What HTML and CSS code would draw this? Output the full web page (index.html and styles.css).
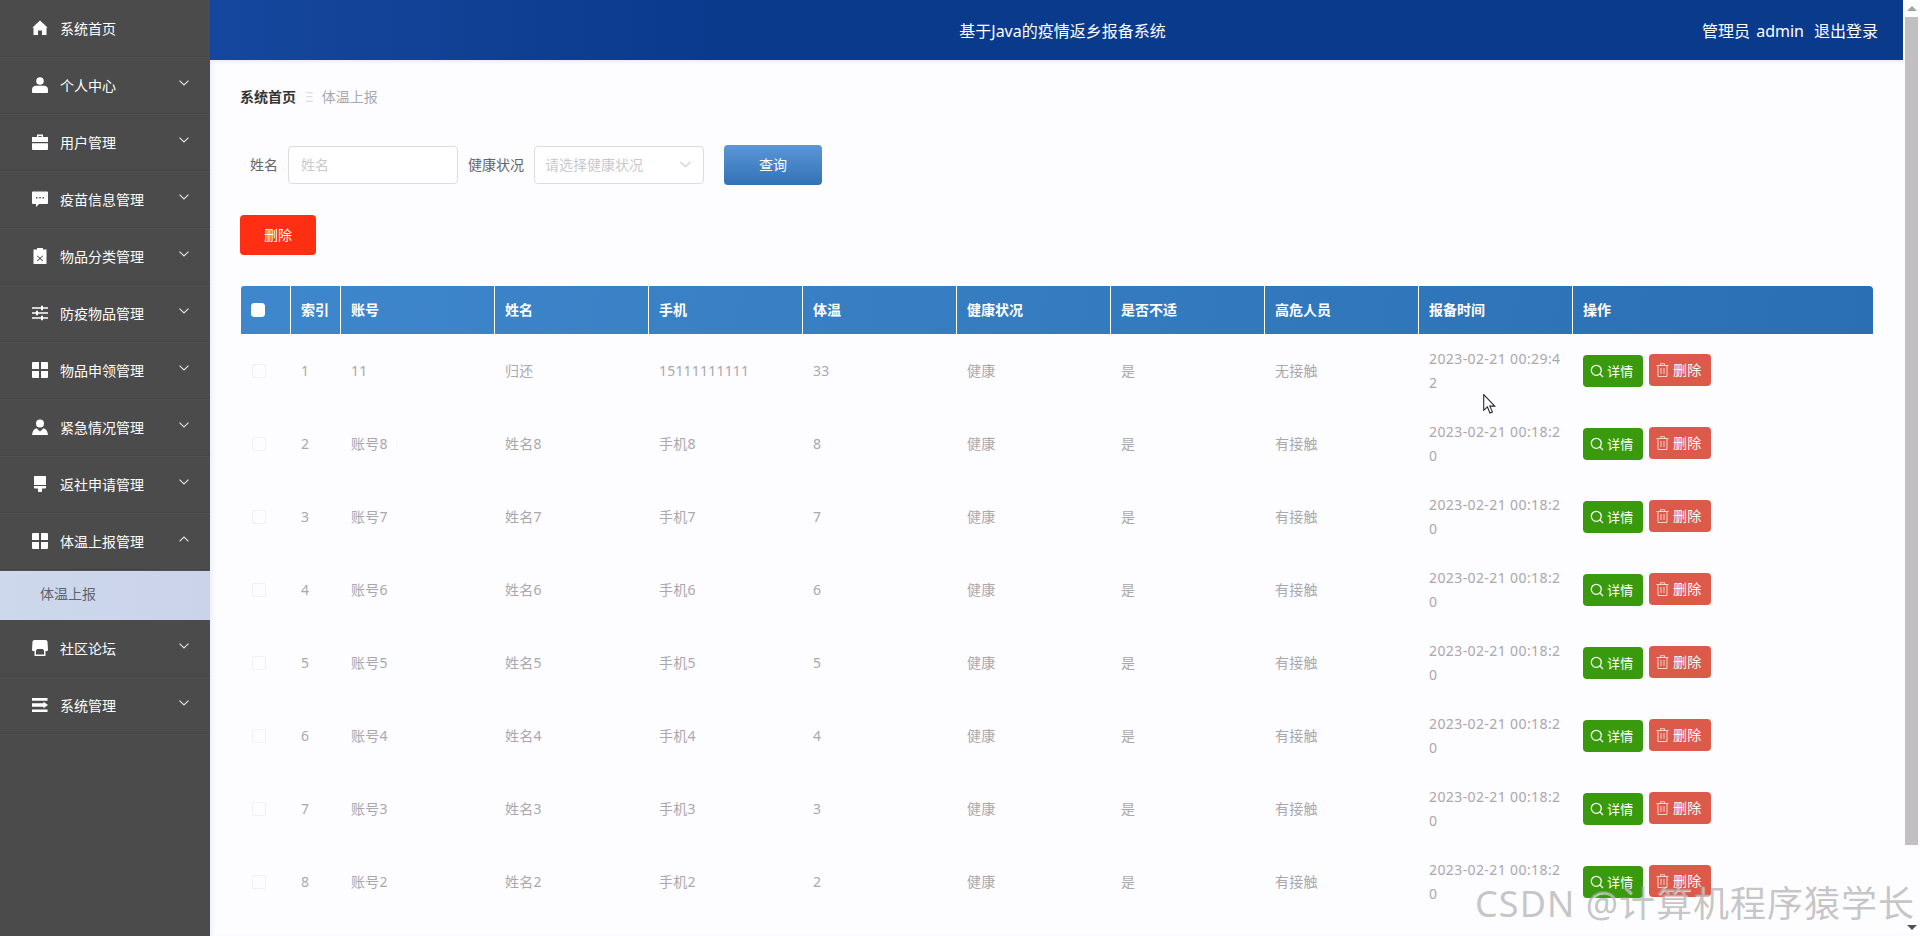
FILE: index.html
```html
<!DOCTYPE html>
<html lang="zh-cn">
<head>
<meta charset="UTF-8">
<title>基于Java的疫情返乡报备系统</title>
<link rel="stylesheet" href="styles.css">
</head>
<body>
<svg class="defs" width="0" height="0">
  <symbol id="i-search" viewBox="0 0 14 14"><circle cx="6.3" cy="6.3" r="5" fill="none" stroke="currentColor" stroke-width="1.3"/><path d="M10 10l3 3" stroke="currentColor" stroke-width="1.3" fill="none"/></symbol>
  <symbol id="i-trash" viewBox="0 0 13 14"><path d="M.5 2.5h12M4.5 2.5V.7h4v1.8M2 2.5v11h9v-11M5 5v6M8 5v6" stroke="currentColor" stroke-width="1" fill="none"/></symbol>
  <symbol id="i-down" viewBox="0 0 10 6"><path d="M.5.7L5 5l4.500-4.300" stroke="currentColor" stroke-width="1.100" fill="none"/></symbol>
  <symbol id="i-grid" viewBox="0 0 16 16"><path d="M0 1a1 1 0 0 1 1-1h6v7H0zM9 0h6a1 1 0 0 1 1 1v6H9zM0 9h7v7H1a1 1 0 0 1-1-1zM9 9h7v6a1 1 0 0 1-1 1H9z" fill="currentColor"/></symbol>
</svg>
<div class="page">
  <aside class="sidebar">
    <ul class="nav">
      <li class="nav-item"><svg class="nav-icon" viewBox="0 0 16 16"><path d="M8 .5L15.500 7.500 14.500 8V15H10V10.500H6V15H1.500V8L.5 7.500z" fill="currentColor"/></svg><span>系统首页</span></li>
      <li class="nav-item"><svg class="nav-icon" viewBox="0 0 16 16"><circle cx="8" cy="4" r="3.800" fill="currentColor"/><path d="M0 15v-2.500C0 10 2 8.800 4 8.800h8c2 0 4 1.200 4 3.700V15a1 1 0 0 1-1 1H1a1 1 0 0 1-1-1z" fill="currentColor"/></svg><span>个人中心</span><svg class="nav-arrow"><use href="#i-down"/></svg></li>
      <li class="nav-item"><svg class="nav-icon" viewBox="0 0 16 16"><path d="M5 3V.5h6V3h5v5H0V3zM6.500 3h3V2h-3zM0 9.200h16V15a1 1 0 0 1-1 1H1a1 1 0 0 1-1-1z" fill="currentColor" fill-rule="evenodd"/></svg><span>用户管理</span><svg class="nav-arrow"><use href="#i-down"/></svg></li>
      <li class="nav-item"><svg class="nav-icon" viewBox="0 0 16 16"><path d="M1 .5h14a1 1 0 0 1 1 1V12a1 1 0 0 1-1 1H7l-3 3v-3H1a1 1 0 0 1-1-1V1.500a1 1 0 0 1 1-1zM4 6v1.500h1.500V6zM7.300 6v1.500h1.500V6zM10.500 6v1.500H12V6z" fill="currentColor" fill-rule="evenodd"/></svg><span>疫苗信息管理</span><svg class="nav-arrow"><use href="#i-down"/></svg></li>
      <li class="nav-item"><svg class="nav-icon" viewBox="0 0 16 16"><path d="M5 1.500V0h6v1.500h3.500V16h-13V1.500zM5.400 7.400l-.6.6L7.300 10.300 4.800 12.700l.6.6L8 11l2.600 2.300.6-.6-2.500-2.400L11.200 8l-.6-.6L8 9.700z" fill="currentColor" fill-rule="evenodd"/></svg><span>物品分类管理</span><svg class="nav-arrow"><use href="#i-down"/></svg></li>
      <li class="nav-item"><svg class="nav-icon" viewBox="0 0 16 16"><path d="M0 2.300h9V.8h2v1.500h5v1.400h-5v1.500H9V3.700H0zM0 7.300h4V5.800h2v1.500h10v1.400H6v1.500H4V8.700H0zM0 12.300h9v-1.500h2v1.500h5v1.400h-5v1.500H9v-1.500H0z" fill="currentColor"/></svg><span>防疫物品管理</span><svg class="nav-arrow"><use href="#i-down"/></svg></li>
      <li class="nav-item"><svg class="nav-icon"><use href="#i-grid"/></svg><span>物品申领管理</span><svg class="nav-arrow"><use href="#i-down"/></svg></li>
      <li class="nav-item"><svg class="nav-icon" viewBox="0 0 16 16"><circle cx="8" cy="4.500" r="4" fill="currentColor"/><path d="M4.500 9.300L8 12.500l3.500-3.200C14 9.800 15.500 12 16 16H0C.5 12 2 9.800 4.500 9.300z" fill="currentColor"/></svg><span>紧急情况管理</span><svg class="nav-arrow"><use href="#i-down"/></svg></li>
      <li class="nav-item"><svg class="nav-icon" viewBox="0 0 16 16"><path d="M2 0h12v9H2zM2 10h12v1.500a1 1 0 0 1-1 1h-3V15a2 2 0 0 1-4 0v-2.500H3a1 1 0 0 1-1-1z" fill="currentColor"/></svg><span>返社申请管理</span><svg class="nav-arrow"><use href="#i-down"/></svg></li>
      <li class="nav-item"><svg class="nav-icon"><use href="#i-grid"/></svg><span>体温上报管理</span><svg class="nav-arrow nav-arrow-up"><use href="#i-down"/></svg></li>
      <li class="nav-sub">体温上报</li>
      <li class="nav-item"><svg class="nav-icon" viewBox="0 0 16 16"><path d="M2.500 0h11C15 0 15.500 1 15.500 2l.5 7.500c0 1-.5 1.500-1.500 1.500h-1v5h-11v-5h-1C.5 11 0 10.500 0 9.500L.5 2C.5 1 1 0 2.500 0zM4 10.500V14.500h8V10.500L10.800 9H5.200z" fill="currentColor" fill-rule="evenodd"/></svg><span>社区论坛</span><svg class="nav-arrow"><use href="#i-down"/></svg></li>
      <li class="nav-item"><svg class="nav-icon" viewBox="0 0 16 16"><path d="M0 1h15.500v2.800H0zM0 6.300h11.500V4.800L16 8l-4.500 3.200V9.700H0zM0 12.500h15.500V15H0z" fill="currentColor"/></svg><span>系统管理</span><svg class="nav-arrow"><use href="#i-down"/></svg></li>
    </ul>
  </aside>
  <div class="main">
    <header class="topbar">
      <div class="topbar-title">基于Java的疫情返乡报备系统</div>
      <div class="topbar-user"><span>管理员 admin</span><span>退出登录</span></div>
    </header>
    <div class="content">
      <div class="crumb"><b>系统首页</b><i>Ξ</i><span>体温上报</span></div>
      <form class="search">
        <label>姓名</label>
        <input class="field" placeholder="姓名">
        <label>健康状况</label>
        <div class="field field-select"><span>请选择健康状况</span><svg class="select-arrow"><use href="#i-down"/></svg></div>
        <button type="button" class="btn btn-query">查询</button>
      </form>
      <div class="tools"><button type="button" class="btn btn-remove">删除</button></div>
      <table class="list">
        <thead>
          <tr>
            <th class="w-s"><span class="check check-head"></span></th>
            <th class="w-s">索引</th>
            <th class="w-m">账号</th>
            <th class="w-m">姓名</th>
            <th class="w-m">手机</th>
            <th class="w-m">体温</th>
            <th class="w-m">健康状况</th>
            <th class="w-m">是否不适</th>
            <th class="w-m">高危人员</th>
            <th class="w-m">报备时间</th>
            <th>操作</th>
          </tr>
        </thead>
        <tbody>
          <tr><td><span class="check"></span></td><td>1</td><td>11</td><td>归还</td><td>15111111111</td><td>33</td><td>健康</td><td>是</td><td>无接触</td><td class="time">2023-02-21 00:29:42</td><td><div class="ops"><a class="op op-view"><svg><use href="#i-search"/></svg>详情</a><a class="op op-del"><svg><use href="#i-trash"/></svg>删除</a></div></td></tr>
          <tr><td><span class="check"></span></td><td>2</td><td>账号8</td><td>姓名8</td><td>手机8</td><td>8</td><td>健康</td><td>是</td><td>有接触</td><td class="time">2023-02-21 00:18:20</td><td><div class="ops"><a class="op op-view"><svg><use href="#i-search"/></svg>详情</a><a class="op op-del"><svg><use href="#i-trash"/></svg>删除</a></div></td></tr>
          <tr><td><span class="check"></span></td><td>3</td><td>账号7</td><td>姓名7</td><td>手机7</td><td>7</td><td>健康</td><td>是</td><td>有接触</td><td class="time">2023-02-21 00:18:20</td><td><div class="ops"><a class="op op-view"><svg><use href="#i-search"/></svg>详情</a><a class="op op-del"><svg><use href="#i-trash"/></svg>删除</a></div></td></tr>
          <tr><td><span class="check"></span></td><td>4</td><td>账号6</td><td>姓名6</td><td>手机6</td><td>6</td><td>健康</td><td>是</td><td>有接触</td><td class="time">2023-02-21 00:18:20</td><td><div class="ops"><a class="op op-view"><svg><use href="#i-search"/></svg>详情</a><a class="op op-del"><svg><use href="#i-trash"/></svg>删除</a></div></td></tr>
          <tr><td><span class="check"></span></td><td>5</td><td>账号5</td><td>姓名5</td><td>手机5</td><td>5</td><td>健康</td><td>是</td><td>有接触</td><td class="time">2023-02-21 00:18:20</td><td><div class="ops"><a class="op op-view"><svg><use href="#i-search"/></svg>详情</a><a class="op op-del"><svg><use href="#i-trash"/></svg>删除</a></div></td></tr>
          <tr><td><span class="check"></span></td><td>6</td><td>账号4</td><td>姓名4</td><td>手机4</td><td>4</td><td>健康</td><td>是</td><td>有接触</td><td class="time">2023-02-21 00:18:20</td><td><div class="ops"><a class="op op-view"><svg><use href="#i-search"/></svg>详情</a><a class="op op-del"><svg><use href="#i-trash"/></svg>删除</a></div></td></tr>
          <tr><td><span class="check"></span></td><td>7</td><td>账号3</td><td>姓名3</td><td>手机3</td><td>3</td><td>健康</td><td>是</td><td>有接触</td><td class="time">2023-02-21 00:18:20</td><td><div class="ops"><a class="op op-view"><svg><use href="#i-search"/></svg>详情</a><a class="op op-del"><svg><use href="#i-trash"/></svg>删除</a></div></td></tr>
          <tr><td><span class="check"></span></td><td>8</td><td>账号2</td><td>姓名2</td><td>手机2</td><td>2</td><td>健康</td><td>是</td><td>有接触</td><td class="time">2023-02-21 00:18:20</td><td><div class="ops"><a class="op op-view"><svg><use href="#i-search"/></svg>详情</a><a class="op op-del"><svg><use href="#i-trash"/></svg>删除</a></div></td></tr>
        </tbody>
      </table>
    </div>
  </div>
</div>
<div class="scroll">
  <div class="scroll-up"></div>
  <div class="scroll-thumb"></div>
  <div class="scroll-down"></div>
</div>
<svg class="cursor" viewBox="0 0 12 19"><path d="M.5.5V15.500L4 12.300 6.500 18 8.800 17 6.300 11.500H11z" fill="#fff" stroke="#222" stroke-width="1"/></svg>
<div class="watermark">CSDN @计算机程序猿学长</div>
</body>
</html>
```

FILE: styles.css
```css
* { box-sizing: border-box; }
html, body { height: 100%; }
body {
    margin: 0;
    display: flex;
    overflow: hidden;
    position: relative;
    background: #fff;
    color: #333;
    font-family: "Noto Sans", "Noto Sans CJK SC", sans-serif;
    font-size: 14px;
}
.defs { position: absolute; }
.page {
    flex: 1;
    min-width: 0;
    display: flex;
    height: 100%;
    overflow: hidden;
}

/* 左侧菜单 */
.sidebar {
    width: 210px;
    flex: none;
    background: #4b4b4b;
    z-index: 2;
}
.nav { list-style: none; margin: 0; padding: 0; }
.nav-item {
    height: 57px;
    display: flex;
    align-items: center;
    padding-left: 32px;
    color: #fff;
    border-bottom: 1px solid #444;
    box-shadow: 0 1px 0 #525252;
    position: relative;
}
.nav-item span { margin-left: 12px; }
.nav-icon { width: 16px; height: 16px; color: #fff; flex: none; }
.nav-arrow {
    position: absolute;
    left: 179px;
    top: 23px;
    width: 10px;
    height: 6px;
    color: #e4e4e4;
}
.nav-arrow-up { transform: rotate(180deg); }
.nav-sub {
    height: 49.500px;
    line-height: 48px;
    padding-left: 40px;
    color: #5d6470;
    background: linear-gradient(90deg, #cdd8ec, #cbd3ea);
}

/* 顶部 */
.main {
    flex: 1;
    min-width: 0;
    background: #fdfcff;
    box-shadow: inset 5px 0 5px -3px #e6f0fb;
}
.topbar {
    height: 60px;
    display: flex;
    align-items: center;
    padding-left: 12px;
    color: #fff;
    font-size: 16px;
    background: linear-gradient(90deg, #15479e, #0a3a8c 30%);
    box-shadow: 0 1px 4px #dbe6f5;
    position: relative;
}
.topbar-title { flex: 1; text-align: center; }
.topbar-user {
    position: absolute;
    right: 25px;
    display: flex;
    gap: 10px;
    word-spacing: 2px;
}

/* 内容 */
.content { padding: 27px 30px 0 30px; }
.crumb { height: 20px; line-height: 20px; display: flex; align-items: center; }
.crumb b { font-weight: 700; color: #333; }
.crumb i { font-style: normal; font-size: 14px; color: #ddd; margin: 0 8px 0 9px; }
.crumb span { color: #a9a9ad; }

.search {
    display: flex;
    align-items: center;
    height: 40px;
    margin-top: 38px;
    padding-left: 10px;
}
.search label { color: #666; margin: 0 10px 2px 0; }
.field {
    width: 170px;
    height: 38px;
    margin-right: 10px;
    padding: 0 12px 2px 12px;
    border: 1px solid #dcdce2;
    border-radius: 4px;
    background: #fff;
    font: inherit;
    color: #c9c9d0;
    outline: none;
}
.field::placeholder { color: #c9c9d0; }
.field-select {
    display: flex;
    align-items: center;
    justify-content: space-between;
    margin-right: 20px;
    padding-left: 10px;
}
.select-arrow { width: 11px; height: 7px; color: #cfcfd6; }
.btn {
    height: 40px;
    padding: 0 0 2px 0;
    border: none;
    border-radius: 4px;
    color: #fff;
    font: inherit;
}
.btn-query {
    width: 98px;
    background: linear-gradient(180deg, #5b96d6, #3272b6);
}
.tools { margin-top: 30px; }
.btn-remove { width: 76px; background: #ff2f14; }

/* 表格 */
.list {
    width: 1632px;
    margin: 31px 0 0 1px;
    border-collapse: separate;
    border-spacing: 0;
    table-layout: fixed;
}
.list thead tr {
    background: linear-gradient(100deg, #3f87cc, #2a6fb3);
}
.list th {
    height: 48px;
    padding: 0 10px 2px 10px;
    text-align: left;
    color: #fff;
    font-weight: 700;
    border-right: 1px solid #fff;
}
.list th:first-child { border-top-left-radius: 3px; }
.list th:last-child { border-right: none; border-top-right-radius: 4px; }
.w-s { width: 50px; }
.w-m { width: 154px; }
.list td {
    height: 73px;
    padding: 0 10px;
    color: #aaa8ad;
    line-height: 24px;
    letter-spacing: .2px;
    word-break: break-all;
}
.list td.time { letter-spacing: .4px; }
.check {
    display: block;
    width: 14px;
    height: 14px;
    margin-left: 1px;
    border: 1px solid #f4f1f6;
    border-radius: 2px;
}
.check-head { margin: 2px 0 0 0; background: #fff; border-color: #fff; border-radius: 3px; }
.ops { display: flex; align-items: flex-start; gap: 6px; }
.op {
    display: flex;
    align-items: center;
    height: 32px;
    color: #fff;
    border-radius: 4px;
    white-space: nowrap;
}
.op-view {
    width: 60px;
    margin-top: 1px;
    padding-left: 7px;
    gap: 3px;
    font-size: 13px;
    background: #389a0c;
}
.op-view svg { width: 14px; height: 14px; }
.op-del {
    width: 62px;
    padding-left: 7px;
    gap: 4px;
    background: #dc5a4a;
}
.op-del svg { width: 13px; height: 14px; color: #fbd2cc; }

/* 滚动条 */
.scroll {
    width: 17px;
    flex: none;
    display: flex;
    flex-direction: column;
    align-items: center;
    background: #fdfcff;
}
.scroll-up, .scroll-down {
    width: 0;
    height: 0;
    margin: 6px 0;
    border: 5px solid transparent;
    border-top: none;
    border-bottom: 5px solid #a3a3a3;
}
.scroll-down {
    margin-top: auto;
    border-bottom: none;
    border-top: 5px solid #505050;
}
.scroll-thumb {
    width: 13px;
    height: 828px;
    background: #c1bfc1;
}

.cursor {
    position: absolute;
    left: 1483px;
    top: 394px;
    width: 13px;
    height: 20px;
}
.watermark {
    position: absolute;
    right: 5px;
    top: 881px;
    font-size: 36px;
    line-height: 46px;
    letter-spacing: 1px;
    white-space: nowrap;
    color: rgba(150, 150, 150, .55);
    text-shadow: 1px 1px 1px rgba(255, 255, 255, .7);
    z-index: 3;
}
```
